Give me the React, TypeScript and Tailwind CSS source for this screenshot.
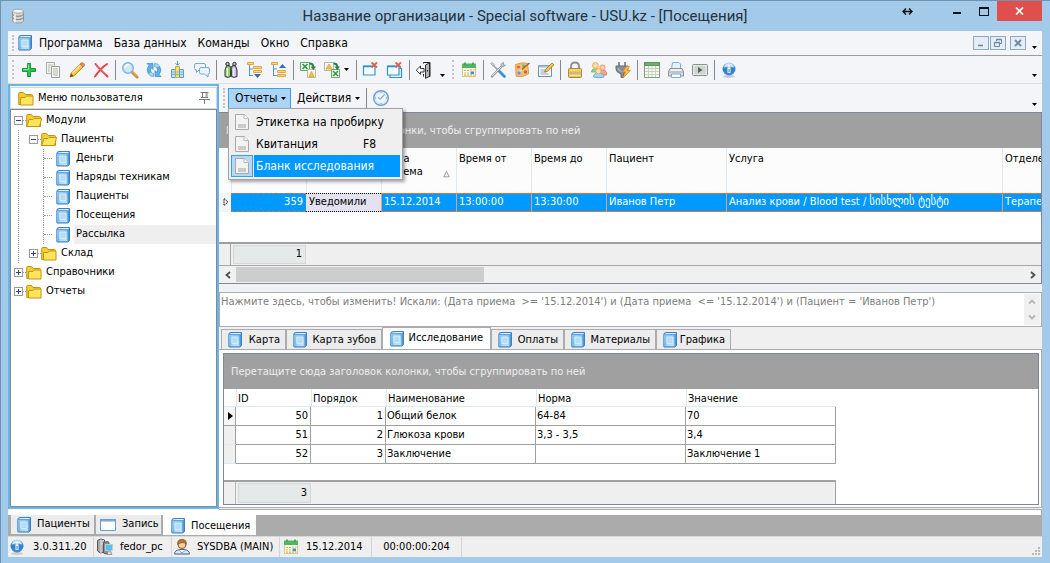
import { useState, type ReactNode } from 'react';

type IconProps = { className?: string };

function Svg({ children, className = 'size-[18px] shrink-0', box = '0 0 18 18' }: { children: ReactNode; className?: string; box?: string }) {
  return (
    <svg viewBox={box} className={className} fill="none" aria-hidden="true">
      {children}
    </svg>
  );
}

function BookIcon({ className = 'h-4 w-3.5 shrink-0' }: IconProps) {
  return (
    <Svg className={className} box="0 0 14 16">
      <path d="M1 1.500L2.500.500h11v13L12 15H1z" fill="#4f97d6" stroke="#3a80c2" />
      <path d="M1.500 1.800L2.800 1H13l-1 1.200z" fill="#e4f2fc" />
      <path d="M.6 2.500h11.200v12H.6z" fill="url(#book)" stroke="#5a9fd8" strokeWidth=".8" />
      <path d="M2 3v11" stroke="#6fb2e4" strokeWidth=".7" />
      <path d="M3.800 5h6.200v6.500H3.800z" fill="#b4dcf7" stroke="#d9effc" strokeWidth=".9" />
      <path d="M3.500 13h7" stroke="#e4f4fe" strokeWidth=".8" />
    </Svg>
  );
}

function FolderIcon({ open = false }: { open?: boolean }) {
  return (
    <Svg className="h-[15px] w-4 shrink-0" box="0 0 16 15">
      <path d="M.7 13.500V2.500q0-1 1-1h3.800l1.500 2h6.500q1 0 1 1v9z" fill="#f5cb36" stroke="#c4960f" />
      {open ? (
        <path d="M.8 13.500L3 6.500h4l1-1h7.600l-2.100 8z" fill="#ffe45e" stroke="#c4960f" />
      ) : (
        <path d="M2.500 14V6.500h4.500l1.500-1.500h6.500V14z" fill="#ffe45e" stroke="#c4960f" />
      )}
    </Svg>
  );
}

function Gradients() {
  return (
    <svg className="absolute size-0" aria-hidden="true">
      <defs>
        <linearGradient id="book" x1="0" y1="0" x2="1" y2="1">
          <stop offset="0" stopColor="#a4d2f3" />
          <stop offset="0.500" stopColor="#84c0eb" />
          <stop offset="1" stopColor="#b8def8" />
        </linearGradient>
        <linearGradient id="globe" x1="0" y1="0" x2="0" y2="1">
          <stop offset="0" stopColor="#9dcdf2" />
          <stop offset="0.500" stopColor="#2f7fc8" />
          <stop offset="1" stopColor="#3f8fd6" />
        </linearGradient>
      </defs>
    </svg>
  );
}

function PlusIcon() {
  return (
    <Svg>
      <path d="M7.500 2.500h3v5h5v3h-5v5h-3v-5h-5v-3h5z" fill="#35c04a" stroke="#14983a" />
      <path d="M8.500 3.500v5h-5" stroke="#8fe39a" />
    </Svg>
  );
}
function CopyIcon() {
  return (
    <Svg>
      <path d="M2.500 1.500h8v11h-8z" fill="#f2f2f2" stroke="#a9aaa8" />
      <path d="M4 4h5M4 6h2M4 8h2M4 10h2" stroke="#b5b8b0" />
      <path d="M7.500 5.500h8v11h-8z" fill="#fafaf8" stroke="#9b9c98" />
      <path d="M9 8h5M9 10h5M9 12h5M9 14h5" stroke="#b0b3a8" />
    </Svg>
  );
}
function PencilIcon() {
  return (
    <Svg>
      <path d="M2 16l1.200-4L13 2.200 16 5 6.200 14.800z" fill="#fbc83a" stroke="#d58a1a" />
      <path d="M4.500 12L13 3.500" stroke="#ffe9a0" strokeWidth="1.500" />
      <path d="M12 3.200l3 2.900 1.500-1.500q.5-1-.6-2-1.100-1-2.200-.9z" fill="#e48a72" stroke="#b9604e" strokeWidth=".7" />
      <path d="M2 16l1-3.500L5.500 15z" fill="#6b4a2a" />
    </Svg>
  );
}
function CrossIcon() {
  return (
    <Svg>
      <path d="M3.500 3q2.500 3.500 12 12.500M15 3Q9 7 3 15.500" stroke="#e2414b" strokeWidth="2" strokeLinecap="round" />
      <path d="M4 3.500q3 3.500 10 10" stroke="#f38a90" strokeWidth=".7" />
    </Svg>
  );
}
function SearchIcon() {
  return (
    <Svg>
      <path d="M11 11l5 5" stroke="#c98a3a" strokeWidth="3" strokeLinecap="round" />
      <path d="M11.500 11l4.500 4.500" stroke="#f0c070" strokeWidth="1" />
      <circle cx="7" cy="7" r="5.300" fill="#c9e8fa" stroke="#7fb4dc" strokeWidth="1.500" />
      <path d="M4 6.500Q4.500 4 7.500 3.800" stroke="#fff" strokeWidth="1.400" strokeLinecap="round" />
    </Svg>
  );
}
function RefreshIcon() {
  return (
    <Svg>
      <path d="M2 2.500h6v6L6.200 6.700Q4.800 8.500 6 11l-2.700 1.500Q.8 8 3.900 4.400z" fill="#5db3e6" stroke="#3f94d0" strokeWidth=".8" />
      <path d="M16 15.500h-6v-6l1.800 1.800Q13.200 9.500 12 7l2.700-1.500Q17.200 10 14.100 13.600z" fill="#5db3e6" stroke="#3f94d0" strokeWidth=".8" />
      <path d="M9.500 2.500q4-.3 5.200 3L12 7Q11.500 5.500 9.500 5.500zM8.500 15.500q-4 .3-5.200-3L6 11q.5 1.500 2.500 1.500z" fill="#a5daf7" stroke="#3f94d0" strokeWidth=".6" />
    </Svg>
  );
}
function ChartIcon() {
  return (
    <Svg>
      <path d="M2.500 8.500h4v8h-4z" fill="#bfe0f6" stroke="#5a9fd4" />
      <path d="M6.500 5.500h4v11h-4z" fill="#fde05a" stroke="#d0a83a" />
      <path d="M10.500 8.500h4v8h-4z" fill="#bfe0f6" stroke="#5a9fd4" />
      <path d="M2 11h13M2 13.500h13" stroke="#6fa6c8" strokeWidth=".8" />
      <path d="M8.500 0v4M6.500 2.300l2 2 2-2" stroke="#4d93cc" />
    </Svg>
  );
}
function ChatIcon() {
  return (
    <Svg>
      <path d="M3 2.500h8q1.500 0 1.500 1.500v3.500q0 1.500-1.500 1.500H6L3.500 11.500V9H3Q1.500 9 1.500 7.500V4Q1.500 2.500 3 2.500z" fill="#eef6fc" stroke="#78a9cf" />
      <path d="M8 6.500h7q1.500 0 1.500 1.500v3.500q0 1.500-1.500 1.500v3L11.500 13H8q-1.500 0-1.500-1.500V8Q6.500 6.500 8 6.500z" fill="#e8f3fb" stroke="#78a9cf" />
    </Svg>
  );
}
function BinocularsIcon() {
  return (
    <Svg>
      <circle cx="5.500" cy="3" r="1.700" fill="#b5b5b5" stroke="#333" />
      <circle cx="12.500" cy="3" r="1.700" fill="#b5b5b5" stroke="#333" />
      <path d="M4.500 4.800h3.500l.6 3.200v7.500q-3 1.800-5.600 0V9z" fill="#8fd66a" stroke="#333" />
      <path d="M10 4.800h3.500L15 9v6.500q-2.600 1.800-5.600 0V8z" fill="#c5b8e8" stroke="#333" />
      <path d="M8 5.500h2V9H8z" fill="#555" />
      <path d="M5.200 7v8M11.800 7v8" stroke="#fff" strokeWidth="1.200" />
    </Svg>
  );
}
function TreeIcon({ up = false }: { up?: boolean }) {
  return (
    <Svg>
      <path d="M3.500 3.500v11.500M3.500 8h3.500M3.500 14.500h3.500" stroke="#4a97d6" />
      <path d="M1.500 1.500h6v2h-6z" fill="#fbd884" stroke="#e8a53c" />
      {up ? (
        <>
          <path d="M7.500 9.500h8v2h-8zM7.500 13.500h8v2h-8z" fill="#fbd884" stroke="#e8a53c" />
          <path d="M9 7h7l-3.500-4z" fill="#2f6fb8" />
        </>
      ) : (
        <>
          <path d="M7.500 5.500h8v2h-8zM7.500 9.500h8v2h-8z" fill="#fbd884" stroke="#e8a53c" />
          <path d="M8 13h7l-3.500 4z" fill="#2f6fb8" />
        </>
      )}
    </Svg>
  );
}
function ExcelIcon({ back = false }: { back?: boolean }) {
  return (
    <Svg>
      {back ? (
        <>
          <path d="M1.500 1.500h9v8h-9z" fill="#f8f8f2" stroke="#b5b5ac" />
          <path d="M3 8l3-5L9 8z" fill="#f8c24a" stroke="#d6952a" strokeWidth=".7" />
          <path d="M8.500 8.500h8v8h-8z" fill="#eefaf0" stroke="#6aa66e" />
          <path d="M10 10l5 5M15 10l-5 5" stroke="#2f9a42" strokeWidth="1.500" />
        </>
      ) : (
        <>
          <path d="M1.500 1.500h9v8h-9z" fill="#eefaf0" stroke="#6aa66e" />
          <path d="M3.500 3l5 5M8.500 3l-5 5" stroke="#2f9a42" strokeWidth="1.600" />
          <path d="M8.500 8.500h8v8h-8z" fill="#f8f6ee" stroke="#c2b89a" />
          <path d="M10 15.500l2.500-5 2.500 5z" fill="#f8c24a" stroke="#d6952a" strokeWidth=".7" />
        </>
      )}
      <path d="M10.500 2.500q3.800 0 3.800 3.500" stroke="#2f7d4a" strokeWidth="1.800" />
      <path d="M11.500 5.500h5.500L14.300 9z" fill="#2f7d4a" />
    </Svg>
  );
}
function WindowCloseIcon({ many = false }: { many?: boolean }) {
  return (
    <Svg>
      {many && <path d="M4 7.500h11.500v9H4z" fill="#e6f3fc" stroke="#2f94d8" strokeWidth="1.200" />}
      <path d="M1.500 5h11.500v9H1.500z" fill="#f8fcff" stroke="#2f94d8" strokeWidth="1.200" />
      <path d="M1.500 5.500h8" stroke="#2f94d8" strokeWidth="1.600" />
      <path d="M9.500 1.500l5.500 5M15 1.500l-5.500 5" stroke="#d4664f" strokeWidth="1.800" />
    </Svg>
  );
}
function ExitIcon() {
  return (
    <Svg>
      <path d="M8.500 2.500V1.500h6.500v14h-3M8.500 13v2.500" stroke="#222" />
      <path d="M10.500 4L14.500 1.800v13.700l-4 1.800z" fill="#b5b5b5" stroke="#222" strokeWidth=".9" />
      <path d="M12.500 9v1.500" stroke="#222" />
      <path d="M9 7.500H5.500V5L1.200 9.200l4.300 4.200V11H9z" fill="#fff" stroke="#222" strokeWidth=".9" />
    </Svg>
  );
}
function CalendarIcon({ className = 'size-[18px] shrink-0' }: IconProps) {
  return (
    <Svg className={className}>
      <rect x="2.500" y="3.500" width="13" height="12" fill="#fdfbea" stroke="#dcc486" />
      <rect x="2" y="2.500" width="14" height="4.500" fill="#4fb75f" />
      <path d="M5 1.500v2M13 1.500v2" stroke="#2f8f45" strokeWidth="1.400" />
      <path d="M4 9.500h2M7 9.500h2M4 12h2M7 12h2M4 14.200h2M7 14.200h2M10 14.200h2M13 14.200h1.500M10 9h2M13 9h1.500" stroke="#d6b25e" strokeWidth="1.200" />
      <rect x="10.500" y="10.500" width="3.500" height="2.700" fill="#3f8fd6" />
    </Svg>
  );
}
function ToolsIcon() {
  return (
    <Svg>
      <path d="M9 9l6.500 6.500" stroke="#3f8fd2" strokeWidth="2.800" strokeLinecap="round" />
      <path d="M3 3l6 6" stroke="#9aa0a6" strokeWidth="1.500" />
      <path d="M1.500 2.500L3 1.500l2.500 2.200-1.200 1.500z" fill="#d5d9dc" stroke="#8d949a" strokeWidth=".7" />
      <path d="M3 15.500L13 5" stroke="#8d949a" strokeWidth="2.400" strokeLinecap="round" />
      <path d="M3.200 15L13 5" stroke="#e8ebee" strokeWidth="1" />
      <path d="M14.500 1.500q-3 .5-2.500 3.500 2.500 2 4.500-1l-2 .3z" fill="#c8cdd1" stroke="#8d949a" strokeWidth=".8" />
    </Svg>
  );
}
function PaletteIcon() {
  return (
    <Svg>
      <path d="M2.500 3.500q6-2.500 12-1.200l1.200 10.500q-6 4-12.500 2.500z" fill="#f5c070" stroke="#e09a5a" />
      <circle cx="5.500" cy="6" r="1.600" fill="#e8604c" />
      <circle cx="10.500" cy="4.700" r="1.500" fill="#6cbb5a" />
      <circle cx="12.500" cy="11" r="1.700" fill="#e05a48" />
      <circle cx="6" cy="12" r="1.700" fill="#5a9ce0" />
      <path d="M7 10L16.500 2" stroke="#a0663a" strokeWidth="1.500" />
      <path d="M6.500 10.500L9 8.500" stroke="#e8e0b0" strokeWidth="2" />
    </Svg>
  );
}
function NoteIcon() {
  return (
    <Svg>
      <path d="M1.500 4.500h13v11h-13z" fill="#f6f9fc" stroke="#6d8fb4" />
      <path d="M1.500 4.500h13v2h-13z" fill="#9fbfdf" />
      <path d="M3.500 9h5M3.500 11h6M3.500 13h8" stroke="#93a6ba" />
      <path d="M7.500 11l1-2.500L15 2l2 1.800-6.700 6.500z" fill="#fbc83a" stroke="#a8742a" strokeWidth=".8" />
    </Svg>
  );
}
function LockIcon() {
  return (
    <Svg>
      <path d="M5 8V5.500q0-4 4-4t4 4V8" stroke="#8d8d86" strokeWidth="1.800" />
      <rect x="2.500" y="7.500" width="13" height="9" rx="1" fill="#e6c46a" stroke="#a8893e" />
      <path d="M3.500 9h11M3.500 14.500h11" stroke="#f9e6a8" />
      <path d="M3.500 12h11" stroke="#d0ab54" />
    </Svg>
  );
}
function PeopleIcon() {
  return (
    <Svg>
      <path d="M1.500 11q0-3.500 4-3.500T9.500 11z" fill="#9bd27c" stroke="#7cbb66" />
      <circle cx="5.500" cy="4.500" r="2.900" fill="#fbdca4" stroke="#e8ad62" />
      <path d="M9 14q0-5 4-5t3.500 5z" fill="#f8a29a" stroke="#e47c74" />
      <circle cx="12.500" cy="6.500" r="2.600" fill="#fbd0b0" stroke="#e89a70" />
      <path d="M3.500 16q0-4 5-4t5.500 4q-5 1.500-10.500 0z" fill="#a5d2f5" stroke="#6faadc" />
      <circle cx="8.500" cy="10.200" r="2.600" fill="#fce6b8" stroke="#e4b05e" />
    </Svg>
  );
}
function PlugIcon() {
  return (
    <Svg>
      <path d="M5 1v4M11 1v4" stroke="#777" strokeWidth="1.600" />
      <path d="M2 5h12v2q0 5-4.500 5.500v4H7v-4Q2 12 2 7z" fill="#888e95" stroke="#666c72" />
      <path d="M4 7q1 3 3.500 3.500" stroke="#c2c8ce" />
      <path d="M12.500 5.500L8.500 11h3L9 17l7.500-7.500h-3.500l2.500-4z" fill="#fdc02f" stroke="#e8813a" strokeWidth=".8" />
    </Svg>
  );
}
function TableIcon() {
  return (
    <Svg>
      <path d="M1.500 1.500h15v15h-15z" fill="#fbfff8" stroke="#7fa07a" />
      <path d="M1.500 1.500h15V4.500h-15z" fill="#6fae70" stroke="#5a945e" />
      <path d="M2 7.500h14M2 10.500h14M2 13.500h14M5.500 5v11M9 5v11M12.500 5v11" stroke="#c3d2bf" />
    </Svg>
  );
}
function PrinterIcon() {
  return (
    <Svg>
      <path d="M4.500 8l1-6.500h6.500l1.500 1.500V8z" fill="#e4f1fc" stroke="#7fb0dc" />
      <path d="M3 7.500h12l1.500 3V15h-15v-4.500z" fill="#dcdedf" stroke="#8b8f93" />
      <path d="M1.500 11h15" stroke="#a3a7ab" />
      <path d="M4.500 13h9v3.500h-9z" fill="#f4faff" stroke="#7fa9cf" />
      <path d="M3.500 9h11" stroke="#fff" />
    </Svg>
  );
}
function PlayIcon() {
  return (
    <Svg>
      <rect x="1.500" y="3.500" width="15" height="11" rx="1" fill="#e3e8e5" stroke="#8a928c" />
      <rect x="3.500" y="5" width="11" height="8" fill="#cdd5d0" />
      <path d="M7 6v6l4.500-3z" fill="#5a625c" />
    </Svg>
  );
}
function InfoIcon({ className = 'size-[18px] shrink-0' }: IconProps) {
  return (
    <Svg className={className}>
      <ellipse cx="9" cy="15.500" rx="6" ry="1.500" fill="#c9ccd2" />
      <circle cx="9" cy="8" r="6.500" fill="url(#globe)" />
      <path d="M3.800 6.500Q5 2.200 9 2.200T14.200 6.500Q9 4.500 3.800 6.500z" fill="#cfe6f8" />
      <rect x="7.500" y="6.300" width="3" height="5.500" fill="#fff" />
      <rect x="7.700" y="3.800" width="2.600" height="1.700" fill="#fff" />
      <rect x="8.500" y="8" width="1" height="3" fill="#2f6fb8" />
    </Svg>
  );
}
function ClockIcon() {
  return (
    <Svg>
      <circle cx="9" cy="9" r="7.300" fill="#eef6fd" stroke="#6a9ccc" strokeWidth="1.400" />
      <circle cx="9" cy="9" r="5.700" stroke="#c5def2" strokeWidth=".8" />
      <path d="M12.500 5.500L8.500 10 6 8.500" stroke="#8fabc6" strokeWidth="1.200" />
      <path d="M9 2.800v1.400M9 13.800v1.400M2.800 9h1.400M13.800 9h1.400" stroke="#7aa5cf" />
    </Svg>
  );
}
function DatabaseIcon() {
  return (
    <Svg className="size-4 shrink-0" box="0 0 16 16">
      <path d="M2.500 3.500v9.500q0 2 5.500 2t5.500-2V3.500z" fill="#d4d6d8" stroke="#9a9c9e" />
      <path d="M2.500 6.500q1.500 1.800 5.500 1.800t5.500-1.800M2.500 9.700q1.500 1.800 5.500 1.800t5.500-1.800" stroke="#77797b" />
      <path d="M5 5.500v9" stroke="#f6f6f6" strokeWidth="1.500" />
      <ellipse cx="8" cy="3.200" rx="5.500" ry="2" fill="#f4f4f4" stroke="#a5a6a8" />
    </Svg>
  );
}
function ServerIcon() {
  return (
    <Svg>
      <path d="M1.500 2.500l3-1.500 4 1v12l-4 1-3-2z" fill="#a5a8ab" stroke="#55585b" />
      <path d="M5 3.500l3-1M5 6l3-.5M5 1.500V15" stroke="#e2e4e6" />
      <path d="M7.500 4.500l4-1 1.500 1V15l-3 1-2.500-1z" fill="#8d9195" stroke="#55585b" />
      <path d="M9.500 6.500h7v6h-7z" fill="#4fc1f0" stroke="#c5c9cc" />
      <path d="M12 13h2.500l1.500 3.500h-5z" fill="#d5d8da" stroke="#7d8184" strokeWidth=".7" />
    </Svg>
  );
}
function UserIcon() {
  return (
    <Svg>
      <path d="M1.500 16q0-3.500 5-4.500h5q5 1 5 4.500z" fill="#dce9f7" stroke="#3f5f94" />
      <path d="M5.500 12l3.500 3 3.500-3" fill="#fff" stroke="#7f9fcb" />
      <circle cx="9" cy="6.500" r="4" fill="#f8d09a" stroke="#8a5a2a" />
      <path d="M4.800 6.500Q4 1.500 9 1.500t4.200 5Q11.500 4 9 4.500T4.800 6.500z" fill="#c97a2a" stroke="#6b3f1a" strokeWidth=".7" />
    </Svg>
  );
}
function WindowIcon() {
  return (
    <Svg className="size-4 shrink-0" box="0 0 16 16">
      <path d="M.5 2.500h15v11H.5z" fill="#fdfeff" stroke="#6a9cd2" />
      <path d="M.5 2.500h15v1.500H.5z" fill="#8fb8e4" stroke="#6a9cd2" />
    </Svg>
  );
}
function SheetIcon() {
  return (
    <Svg className="h-4 w-[14px] shrink-0" box="0 0 14 16">
      <path d="M.5.500h8.500l4.500 4v11H.5z" fill="#f3f3f3" stroke="#a9a9a9" />
      <path d="M9 .5v4h4.500" fill="#fff" stroke="#b9b9b9" />
      <path d="M3 11h8M3 13h8" stroke="#a2a2a2" />
    </Svg>
  );
}
function PinIcon() {
  return (
    <Svg className="h-3 w-[11px]" box="0 0 11 12">
      <path d="M1.500 .5h8M3.500 1v4.500M8 1v4.500M2 5.500h7M0 7.500h11M5.500 8v4" stroke="#7a7a7a" />
      <path d="M7 1v4.500" stroke="#a5a5a5" />
    </Svg>
  );
}

function Caret() {
  return (
    <svg viewBox="0 0 5 3" className="h-[3px] w-[5px] shrink-0" aria-hidden="true">
      <path d="M0 0h5L2.500 3z" fill="#000" />
    </svg>
  );
}

function Chevron({ dir, className = 'text-[#505050]' }: { dir: 'left' | 'right' | 'up' | 'down'; className?: string }) {
  const paths = { left: 'M6 1L2.500 4 6 7', right: 'M2 1l3.500 3L2 7', up: 'M1 5.500L4 2.500l3 3', down: 'M1 2.500l3 3 3-3' };
  return (
    <svg viewBox="0 0 8 8" className={`size-2 ${className}`} fill="none" aria-hidden="true">
      <path d={paths[dir]} stroke="currentColor" strokeWidth="1.800" />
    </svg>
  );
}

function Grip() {
  return (
    <span className="flex w-[9px] shrink-0 justify-center self-stretch py-1">
      <span className="w-0 border-l-2 border-dotted border-[#c2c4c8]" />
    </span>
  );
}

function Divider() {
  return (
    <span className="flex w-[5px] shrink-0 justify-center">
      <span className="h-5 w-px bg-[#85878b]" />
    </span>
  );
}

function MoreButton({ label }: { label: string }) {
  return (
    <button type="button" aria-label={label} className="flex w-4 shrink-0 items-end justify-center self-stretch pb-1.5">
      <Caret />
    </button>
  );
}

function ToolButton({ label, children }: { label: string; children: ReactNode }) {
  return (
    <button type="button" aria-label={label} className="flex size-6 shrink-0 items-center justify-center">
      {children}
    </button>
  );
}

function TitleBar() {
  return (
    <header className="grid h-[30px] shrink-0 grid-cols-[1fr_auto_1fr]">
      <div className="flex items-center pl-0.5">
        <DatabaseIcon />
      </div>
      <h1 className="flex items-center font-[Roboto,'Open_Sans',sans-serif] text-[15px] text-[#26313b]">
        Название организации - Special software - USU.kz - [Посещения]
      </h1>
      <div className="flex items-start justify-end">
        <span className="mr-[30px] flex h-5 items-center">
          <svg viewBox="0 0 11 7" className="h-[7px] w-[11px]" fill="none" aria-hidden="true">
            <path d="M1 3.500h9M4 .5l-3 3 3 3M7 .5l3 3-3 3" stroke="#111" strokeWidth="1.400" />
          </svg>
        </span>
        <button type="button" aria-label="Свернуть" className="flex h-5 w-[27px] items-center justify-center pt-1">
          <span className="h-0.5 w-2 bg-[#111]" />
        </button>
        <button type="button" aria-label="Развернуть" className="flex h-5 w-[27px] items-center justify-center">
          <span className="h-[9px] w-2.5 border border-t-2 border-[#111]" />
        </button>
        <button type="button" aria-label="Закрыть" className="flex h-5 w-[45px] items-center justify-center bg-[#e04f4c]">
          <svg viewBox="0 0 9 8" className="h-2 w-[9px]" fill="none" aria-hidden="true">
            <path d="M1 .5l7 7M8 .5l-7 7" stroke="#fff" strokeWidth="1.700" />
          </svg>
        </button>
      </div>
    </header>
  );
}

const mainMenu = ['Программа', 'База данных', 'Команды', 'Окно', 'Справка'];

function MdiButton({ label, children }: { label: string; children: ReactNode }) {
  return (
    <button type="button" aria-label={label} className="flex h-3.5 w-4 items-center justify-center border border-[#8fa9c0] bg-[#e3edf6]">
      <Svg className="size-2.5" box="0 0 10 10">
        {children}
      </Svg>
    </button>
  );
}

function MenuBar() {
  return (
    <nav className="flex h-[25px] shrink-0 items-center border-b border-[#9c9da0] bg-[#f4f5f8]">
      <Grip />
      <BookIcon className="ml-px h-4 w-3.5 shrink-0" />
      <ul className="flex gap-[11px] pl-[7px] text-[12px]">
        {mainMenu.map((item) => (
          <li key={item} className="flex">
            <button type="button">{item}</button>
          </li>
        ))}
      </ul>
      <div className="ml-auto flex items-center gap-px">
        <MdiButton label="Свернуть окно">
          <path d="M2 7.500h5" stroke="#6f879e" strokeWidth="1.600" />
        </MdiButton>
        <MdiButton label="Восстановить окно">
          <path d="M3.500 3V1.500h5v4H7M1.500 4.500h5v4h-5z" stroke="#6f879e" />
          <path d="M1.500 4.500h5M3.500 1.500h5" stroke="#6f879e" strokeWidth="1.500" />
        </MdiButton>
        <span className="w-0.5" />
        <MdiButton label="Закрыть окно">
          <path d="M2 2l6 6M8 2L2 8" stroke="#6f879e" strokeWidth="1.900" />
        </MdiButton>
      </div>
      <MoreButton label="Параметры меню" />
    </nav>
  );
}

function Toolbar() {
  return (
    <div role="toolbar" aria-label="Команды" className="flex h-7 shrink-0 items-center border-b border-[#dddfe3] bg-[#f4f5f8]">
      <Grip />
      <ToolButton label="Добавить"><PlusIcon /></ToolButton>
      <ToolButton label="Копировать"><CopyIcon /></ToolButton>
      <ToolButton label="Изменить"><PencilIcon /></ToolButton>
      <ToolButton label="Удалить"><CrossIcon /></ToolButton>
      <Divider />
      <ToolButton label="Поиск"><SearchIcon /></ToolButton>
      <ToolButton label="Обновить"><RefreshIcon /></ToolButton>
      <ToolButton label="Итоги"><ChartIcon /></ToolButton>
      <ToolButton label="Сообщения"><ChatIcon /></ToolButton>
      <Divider />
      <ToolButton label="Найти"><BinocularsIcon /></ToolButton>
      <ToolButton label="Развернуть все"><TreeIcon /></ToolButton>
      <ToolButton label="Свернуть все"><TreeIcon up /></ToolButton>
      <Divider />
      <ToolButton label="Экспорт"><ExcelIcon /></ToolButton>
      <ToolButton label="Импорт"><ExcelIcon back /></ToolButton>
      <span className="flex w-2.5 justify-start"><Caret /></span>
      <Divider />
      <ToolButton label="Закрыть окно"><WindowCloseIcon /></ToolButton>
      <ToolButton label="Закрыть все окна"><WindowCloseIcon many /></ToolButton>
      <Divider />
      <ToolButton label="Выход"><ExitIcon /></ToolButton>
      <button type="button" aria-label="Параметры панели" className="flex w-3 shrink-0 items-end justify-center self-stretch pb-1.5">
        <Caret />
      </button>
      <Grip />
      <ToolButton label="Календарь"><CalendarIcon /></ToolButton>
      <Divider />
      <ToolButton label="Настройки"><ToolsIcon /></ToolButton>
      <ToolButton label="Оформление"><PaletteIcon /></ToolButton>
      <ToolButton label="Заметки"><NoteIcon /></ToolButton>
      <Divider />
      <ToolButton label="Блокировка"><LockIcon /></ToolButton>
      <ToolButton label="Пользователи"><PeopleIcon /></ToolButton>
      <ToolButton label="Подключение"><PlugIcon /></ToolButton>
      <Divider />
      <ToolButton label="Таблица"><TableIcon /></ToolButton>
      <ToolButton label="Печать"><PrinterIcon /></ToolButton>
      <ToolButton label="Запуск"><PlayIcon /></ToolButton>
      <Divider />
      <ToolButton label="О программе"><InfoIcon /></ToolButton>
      <span className="ml-auto" />
      <MoreButton label="Параметры панели инструментов" />
    </div>
  );
}

function Toggle({ open }: { open: boolean }) {
  return (
    <Svg className="size-[9px] shrink-0" box="0 0 9 9">
      <rect x=".5" y=".5" width="8" height="8" fill="#fff" stroke="#9a9a9a" />
      <path d={open ? 'M2 4.500h5' : 'M2 4.500h5M4.500 2v5'} stroke="#2b3f8f" />
    </Svg>
  );
}

function Branch({ label, open = false, children }: { label: string; open?: boolean; children?: ReactNode }) {
  return (
    <li>
      <button type="button" aria-expanded={open} className="flex h-[19px] items-center">
        <Toggle open={open} />
        <span className="w-[3px] shrink-0 border-t border-dotted border-[#9a9a9a]" />
        <FolderIcon open={open} />
        <span className="pl-1">{label}</span>
      </button>
      {children}
    </li>
  );
}

const patientPages = ['Деньги', 'Наряды техникам', 'Пациенты', 'Посещения', 'Рассылка'];

function SidePanel() {
  return (
    <aside className="flex w-[211px] shrink-0 flex-col border-2 border-[#67b6ea] bg-[#f4f5f8]">
      <div className="mt-px flex h-[22px] items-center border border-[#d5d8dc] bg-white pr-1.5 pl-[7px]">
        <FolderIcon />
        <h2 className="pl-1">Меню пользователя</h2>
        <button type="button" aria-label="Закрепить панель" className="ml-auto">
          <PinIcon />
        </button>
      </div>
      <ul className="flex-1 border border-[#83898f] bg-white pt-px pl-[3px]">
        <Branch label="Модули" open>
          <ul className="ml-1 border-l border-dotted border-[#9a9a9a] pl-2.5">
            <Branch label="Пациенты" open>
              <ul className="ml-1 pl-2.5">
                <li className="flex flex-col">
                  {patientPages.map((page) => (
                    <button key={page} type="button" className="flex h-[19px] items-center border-l border-dotted border-[#9a9a9a]">
                      <span className="mr-1 w-2 shrink-0 border-t border-dotted border-[#9a9a9a]" />
                      <BookIcon className="mr-1 h-4 w-3.5 shrink-0" />
                      <span className={page === 'Рассылка' ? 'flex h-full flex-1 items-center bg-[#efefef] pl-0.5' : 'pl-0.5'}>{page}</span>
                    </button>
                  ))}
                </li>
              </ul>
            </Branch>
            <Branch label="Склад" />
          </ul>
        </Branch>
        <Branch label="Справочники" />
        <Branch label="Отчеты" />
      </ul>
    </aside>
  );
}

const reports = [
  { label: 'Этикетка на пробирку', key: '' },
  { label: 'Квитанция', key: 'F8' },
  { label: 'Бланк исследования', key: '' },
];

function ReportBar() {
  const [selected, setSelected] = useState('Бланк исследования');
  return (
    <div role="toolbar" aria-label="Отчеты и действия" className="flex h-7 shrink-0 items-center bg-[#f4f5f8] text-[12px]">
      <Grip />
      <div className="relative">
        <button type="button" aria-haspopup="menu" aria-expanded="true" className="flex h-[21px] w-[63px] items-center justify-between border border-[#3d9fe2] bg-[#aad5f6] pr-1 pl-1.5">
          Отчеты
          <Caret />
        </button>
        <div role="menu" className="absolute top-full left-0 z-10 -mt-px w-[175px] border border-[#a2a3a6] bg-[#efefef] p-0.5 shadow-[2px_2px_3px_rgba(0,0,0,0.35)]">
          {reports.map(({ label, key }) => {
            const active = label === selected;
            return (
              <button key={label} type="button" role="menuitem" onMouseEnter={() => setSelected(label)} className="flex h-[22px] w-full items-center gap-px whitespace-nowrap">
                <span className={active ? 'flex h-full w-[22px] items-center justify-center border border-[#3d9fe2] bg-[#b5d9f5]' : 'flex w-[22px] justify-center'}>
                  <SheetIcon />
                </span>
                <span className={active ? 'flex h-full flex-1 items-center bg-[#0099ff] pl-0.5 text-white' : 'flex flex-1 items-center pl-0.5'}>{label}</span>
                {key && <span className="pr-6">{key}</span>}
              </button>
            );
          })}
        </div>
      </div>
      <button type="button" className="flex items-center gap-1 pl-1.5">
        Действия
        <Caret />
      </button>
      <span className="w-1" />
      <Divider />
      <ToolButton label="История"><ClockIcon /></ToolButton>
      <span className="ml-auto" />
      <MoreButton label="Параметры панели отчетов" />
    </div>
  );
}

function GroupPanel() {
  return (
    <div className="flex h-[35px] shrink-0 items-center bg-[#a0a0a0] pt-px pl-[7px] text-[#eeeeee]">
      Перетащите сюда заголовок колонки, чтобы сгруппировать по ней
    </div>
  );
}

const visitColumns = ['Время от', 'Время до', 'Пациент', 'Услуга', 'Отделе'];

function VisitsGrid() {
  const cell = 'border-l border-[#dfa079] px-0.5 whitespace-nowrap border-y border-y-[#d8743a]';
  const head = 'border-l border-[#dceaf5] pr-0.5 pt-1 pl-0.5 text-left align-top leading-[13px] font-normal';
  return (
    <section aria-label="Посещения" className="flex flex-col overflow-hidden border border-l-0 border-[#83869a] bg-white">
      <GroupPanel />
      <div className="h-[94px] overflow-hidden">
        <table className="w-[903px] table-fixed border-separate border-spacing-0">
          <colgroup>
            <col className="w-3" />
            <col className="w-[75px]" />
            <col className="w-[75px]" />
            <col className="w-[75px]" />
            <col className="w-[75px]" />
            <col className="w-[75px]" />
            <col className="w-[120px]" />
            <col className="w-[276px]" />
            <col className="w-[120px]" />
          </colgroup>
          <thead>
            <tr className="h-[45px] bg-[#fcfcfc]">
              <th />
              <th className={head} />
              <th className={head} />
              <th className={head}>
                <span className="flex items-end justify-between pr-1">
                  <span>Дата приема</span>
                  <Svg className="size-2" box="0 0 8 8">
                    <path d="M.8 7.200h6.400L4 .8z" stroke="#8a8a8a" strokeWidth=".9" />
                  </Svg>
                </span>
              </th>
              {visitColumns.map((name) => (
                <th key={name} className={head}>{name}</th>
              ))}
            </tr>
          </thead>
          <tbody>
            <tr className="h-[18px] bg-[#0099ff] text-white">
              <td className="bg-[#f4f4f4]">
                <Svg className="ml-1 h-2 w-[6px]" box="0 0 6 8">
                  <path d="M1 .5L5 4 1 7.500z" stroke="#111" strokeDasharray="1.500 .7" />
                </Svg>
              </td>
              <td className="border-y border-dashed border-[#d8743a] pr-[3px] text-right">359</td>
              <td className="border-y border-dotted border-black bg-[#e4e1f0] px-[3px] text-black">Уведомили</td>
              <td className={cell}>15.12.2014</td>
              <td className={cell}>13:00:00</td>
              <td className={cell}>13:30:00</td>
              <td className={cell}>Иванов Петр</td>
              <td className={cell}>
                Анализ крови / Blood test / <span lang="ka" className="text-[12px] leading-none">სისხლის ტესტი</span>
              </td>
              <td className={cell}>Терапе</td>
            </tr>
          </tbody>
        </table>
      </div>
      <div className="flex h-6 border-t-2 border-b border-t-[#a0a0a0] border-b-[#a6a6a6] bg-[#efefef]">
        <span className="w-3 border-r border-[#a6a6a6]" />
        <output className="m-px ml-0.5 flex w-[73px] items-center justify-end border border-[#d3d8d8] bg-[#e6e9ea] pr-[3px]">1</output>
      </div>
      <div className="flex h-[17px] items-center bg-[#f0f0f0]">
        <button type="button" aria-label="Прокрутить влево" className="flex w-[17px] justify-center">
          <Chevron dir="left" />
        </button>
        <span className="flex h-[15px] flex-1">
          <span className="w-[31.500%] bg-[#cdcdcd]" />
        </span>
        <button type="button" aria-label="Прокрутить вправо" className="flex w-[17px] justify-center">
          <Chevron dir="right" />
        </button>
      </div>
    </section>
  );
}

function FilterBox() {
  return (
    <div className="mt-2 flex h-[35px] shrink-0 border border-[#abadb3] bg-white">
      <textarea
        aria-label="Условия поиска"
        readOnly
        className="block min-w-0 flex-1 resize-none overflow-hidden pt-0.5 pl-px leading-[14px] text-[#7d7d7d] outline-none"
        value="Нажмите здесь, чтобы изменить! Искали: (Дата приема  >= '15.12.2014') и (Дата приема  <= '15.12.2014') и (Пациент = 'Иванов Петр')"
      />
      <div className="m-px flex w-4 flex-col bg-[#f0f0f0]">
        <button type="button" aria-label="Вверх" className="flex flex-1 items-center justify-center">
          <Chevron dir="up" className="text-[#b5b5b5]" />
        </button>
        <button type="button" aria-label="Вниз" className="flex flex-1 items-center justify-center">
          <Chevron dir="down" className="text-[#b5b5b5]" />
        </button>
      </div>
    </div>
  );
}

const detailTabs = [
  { label: 'Карта', width: 'w-[65px]' },
  { label: 'Карта зубов', width: 'w-[96px]' },
  { label: 'Исследование', width: 'w-[109px]' },
  { label: 'Оплаты', width: 'w-[73px]' },
  { label: 'Материалы', width: 'w-[92px]' },
  { label: 'Графика', width: 'w-[75px]' },
];

const results = [
  { id: 50, order: 1, name: 'Общий белок', norm: '64-84', value: '70' },
  { id: 51, order: 2, name: 'Глюкоза крови', norm: '3,3 - 3,5', value: '3,4' },
  { id: 52, order: 3, name: 'Заключение', norm: '', value: 'Заключение 1' },
];

function DetailPane() {
  const head = 'border-b border-l border-[#dceaf5] pt-0.5 pl-px text-left leading-[15px] font-normal';
  const cell = 'border-r border-b border-[#a0a0a0] pr-0.5 pl-px';
  return (
    <section className="flex flex-1 flex-col bg-[#f0f0f0]">
      <div role="tablist" className="flex h-[22px] shrink-0 items-end pl-0.5">
        {detailTabs.map(({ label, width }) => {
          const active = label === 'Исследование';
          return (
            <button
              key={label}
              type="button"
              role="tab"
              aria-selected={active}
              className={`flex shrink-0 items-center justify-between border border-b-0 border-[#a9abb0] ${width} ${active ? 'h-[22px] bg-white px-[7px]' : 'h-5 bg-[#ececec] pt-px pr-[5px] pl-1.5'}`}
            >
              <BookIcon />
              {label}
            </button>
          );
        })}
      </div>
      <div className="flex flex-1 flex-col border border-l-0 border-[#a9abb0] bg-white pt-[3px] pr-0.5 pb-0.5 pl-1">
        <div className="flex flex-1 flex-col border border-[#83869a]">
          <GroupPanel />
          <div className="flex-1 pb-4">
            <table className="w-[612px] table-fixed border-separate border-spacing-0">
              <colgroup>
                <col className="w-3" />
                <col className="w-[75px]" />
                <col className="w-[75px]" />
                <col className="w-[150px]" />
                <col className="w-[150px]" />
                <col className="w-[150px]" />
              </colgroup>
              <thead>
                <tr className="h-[18px]">
                  <th className="border-b border-[#dceaf5]" />
                  {['ID', 'Порядок', 'Наименование', 'Норма', 'Значение'].map((name) => (
                    <th key={name} className={head}>{name}</th>
                  ))}
                </tr>
              </thead>
              <tbody>
                {results.map((row, index) => (
                  <tr key={row.id} className="h-[19px]">
                    <td className={index === 0 ? 'border-r border-b border-[#a0a0a0] bg-[#f6f6f6] pl-1' : 'border-r border-b border-[#a0a0a0] border-b-[#dceaf5] bg-[#efefef]'}>
                      {index === 0 && (
                        <svg viewBox="0 0 5 8" className="h-2 w-[5px]" aria-hidden="true">
                          <path d="M0 0l5 4-5 4z" fill="#000" />
                        </svg>
                      )}
                    </td>
                    <td className={`${cell} text-right`}>{row.id}</td>
                    <td className={`${cell} text-right`}>{row.order}</td>
                    <td className={cell}>{row.name}</td>
                    <td className={cell}>{row.norm}</td>
                    <td className={cell}>{row.value}</td>
                  </tr>
                ))}
              </tbody>
            </table>
          </div>
          <div className="flex h-6 w-[612px] shrink-0 border-t-2 border-r border-[#a0a0a0] bg-[#efefef]">
            <span className="w-3 border-r border-[#b5b5b5]" />
            <output className="m-px ml-0.5 flex w-[73px] items-center justify-end border border-[#d3d8d8] bg-[#e6e9ea] pr-[3px]">3</output>
          </div>
        </div>
      </div>
      <div className="mt-px h-[6px] shrink-0 border-t border-r border-[#a9abb0] bg-white" />
    </section>
  );
}

function WindowTabs() {
  const tab = 'flex items-center bg-[#ececec] h-[19px]';
  return (
    <div role="tablist" className="flex h-[22px] shrink-0 items-start gap-0.5 border-b border-[#d8d8d8] bg-[#ababab] pl-[3px]">
      <button type="button" role="tab" aria-selected="false" className={`${tab} w-[83px] gap-1.5 pl-1.5`}>
        <BookIcon />
        Пациенты
      </button>
      <button type="button" role="tab" aria-selected="false" className={`${tab} w-[65px] gap-1.5 pl-1`}>
        <WindowIcon />
        Запись
      </button>
      <button type="button" role="tab" aria-selected="true" className="-mt-0.5 flex h-[22px] w-[93px] items-center gap-1.5 bg-white pt-1 pl-2">
        <BookIcon />
        Посещения
      </button>
    </div>
  );
}

function StatusBar() {
  const part = 'flex items-center border-r border-[#d5d5d5]';
  return (
    <footer className="flex h-5 shrink-0 items-stretch bg-[#efefef]">
      <span className={`${part} w-[86px] gap-[7px]`}>
        <InfoIcon />
        3.0.311.20
      </span>
      <span className={`${part} w-[78px] gap-1.5 pl-0.5`}>
        <ServerIcon />
        fedor_pc
      </span>
      <span className={`${part} w-[108px] gap-1.5 pl-px`}>
        <UserIcon />
        SYSDBA (MAIN)
      </span>
      <span className={`${part} w-[92px] gap-1.5 pl-0.5`}>
        <CalendarIcon />
        15.12.2014
      </span>
      <span className={`${part} w-[90px] justify-center`}>00:00:00:204</span>
      <Svg className="ml-auto size-[11px] self-end" box="0 0 11 11">
        <path d="M7 1h2v2h-2zM4 4h2v2H4zM7 4h2v2H7zM1 7h2v2H1zM4 7h2v2H4zM7 7h2v2H7z" fill="#b9b9b9" />
      </Svg>
    </footer>
  );
}

export default function App() {
  return (
    <div className="flex min-h-screen flex-col border-t border-l border-[#6d94b3] bg-[#a3cbe9] pr-2 pb-1.5 pl-[7px] font-['DejaVu_Sans_Condensed','Noto_Sans',Tahoma,sans-serif] text-[11px] text-black">
      <Gradients />
      <TitleBar />
      <div className="flex flex-1 flex-col">
        <MenuBar />
        <Toolbar />
        <div className="flex flex-1">
          <div className="flex shrink-0 bg-white pb-1.5">
            <SidePanel />
          </div>
          <main className="flex min-w-0 flex-1 flex-col bg-[#f0f1f4]">
            <ReportBar />
            <VisitsGrid />
            <FilterBox />
            <DetailPane />
          </main>
        </div>
        <WindowTabs />
        <StatusBar />
      </div>
    </div>
  );
}
